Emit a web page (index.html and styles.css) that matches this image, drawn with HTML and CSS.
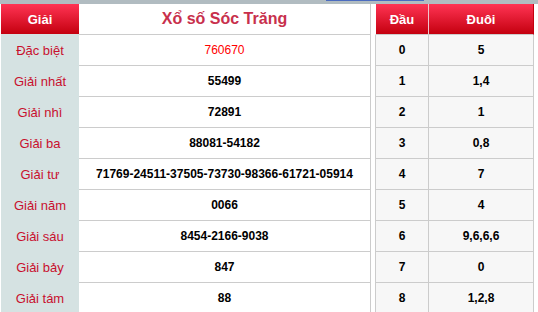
FILE: index.html
```html
<!DOCTYPE html>
<html lang="vi">
<head>
<meta charset="utf-8">
<title>Xổ số Sóc Trăng</title>
<link rel="stylesheet" href="styles.css">
</head>
<body>
<div class="topbar"><span class="thumb"></span></div>
<div class="wrap">
  <div class="kq">
    <div class="row head">
      <div class="lbl">Giải</div>
      <div class="val title">Xổ số Sóc Trăng</div>
    </div>
    <div class="row"><div class="lbl">Đặc biệt</div><div class="val db">760670</div></div>
    <div class="row"><div class="lbl">Giải nhất</div><div class="val">55499</div></div>
    <div class="row"><div class="lbl">Giải nhì</div><div class="val">72891</div></div>
    <div class="row"><div class="lbl">Giải ba</div><div class="val">88081-54182</div></div>
    <div class="row"><div class="lbl">Giải tư</div><div class="val">71769-24511-37505-73730-98366-61721-05914</div></div>
    <div class="row"><div class="lbl">Giải năm</div><div class="val">0066</div></div>
    <div class="row"><div class="lbl">Giải sáu</div><div class="val">8454-2166-9038</div></div>
    <div class="row"><div class="lbl">Giải bảy</div><div class="val">847</div></div>
    <div class="row"><div class="lbl">Giải tám</div><div class="val">88</div></div>
  </div>
  <div class="loto">
    <div class="lrow lhead"><div class="dau">Đầu</div><div class="duoi">Đuôi</div></div>
    <div class="lrow"><div class="dau">0</div><div class="duoi">5</div></div>
    <div class="lrow"><div class="dau">1</div><div class="duoi">1,4</div></div>
    <div class="lrow"><div class="dau">2</div><div class="duoi">1</div></div>
    <div class="lrow"><div class="dau">3</div><div class="duoi">0,8</div></div>
    <div class="lrow"><div class="dau">4</div><div class="duoi">7</div></div>
    <div class="lrow"><div class="dau">5</div><div class="duoi">4</div></div>
    <div class="lrow"><div class="dau">6</div><div class="duoi">9,6,6,6</div></div>
    <div class="lrow"><div class="dau">7</div><div class="duoi">0</div></div>
    <div class="lrow"><div class="dau">8</div><div class="duoi">1,2,8</div></div>
  </div>
</div>
</body>
</html>
```

FILE: styles.css
```css
* { box-sizing: border-box; }
html, body { margin: 0; padding: 0; background: #fff; }
body {
  font-family: "Liberation Sans", Arial, sans-serif;
  width: 538px;
  height: 312px;
  overflow: hidden;
}
.topbar {
  height: 4px;
  background: #b1bcc1;
  padding-left: 326px;
}
.thumb {
  display: block;
  width: 98px;
  height: 1px;
  background: #4b6cc0;
}
.wrap {
  display: flex;
  padding-left: 1px;
  gap: 4px;
}
.kq {
  width: 370px;
  border-right: 1px solid #cccccc;
}
.row {
  display: flex;
  height: 31px;
}
.lbl {
  width: 78px;
  flex: none;
  background: #d5e2e2;
  color: #c8102e;
  font-size: 13px;
  display: flex;
  align-items: center;
  justify-content: center;
}
.val {
  flex: 1;
  border-bottom: 1px solid #cccccc;
  display: flex;
  align-items: center;
  justify-content: center;
  font-size: 12px;
  font-weight: bold;
  color: #000;
}
.head .lbl {
  background: linear-gradient(#ff3454, #c4000f);
  border-bottom: 1px solid #d5e2e2;
  color: #fff;
  font-weight: bold;
}
.title {
  font-size: 16px;
  color: #c8304c;
}
.db {
  color: #ff0000;
  font-weight: normal;
}
.loto {
  width: 159px;
}
.lrow {
  display: flex;
  height: 31px;
  background: #f7f7f7;
  border-left: 1px solid #cccccc;
  border-right: 1px solid #cccccc;
  border-bottom: 1px solid #cccccc;
}
.dau, .duoi {
  display: flex;
  align-items: center;
  justify-content: center;
  font-size: 12px;
  font-weight: bold;
  color: #000;
}
.dau {
  width: 53px;
  border-right: 1px solid #cccccc;
}
.duoi { flex: 1; }
.lhead {
  background: linear-gradient(#ff3454, #c4000f);
  border-left-color: #fff;
  border-right-color: #c4000f;
}
.lhead .dau, .lhead .duoi {
  color: #fff;
  font-size: 13px;
}
.lhead .dau { border-right-color: #f0c4cc; }
```
